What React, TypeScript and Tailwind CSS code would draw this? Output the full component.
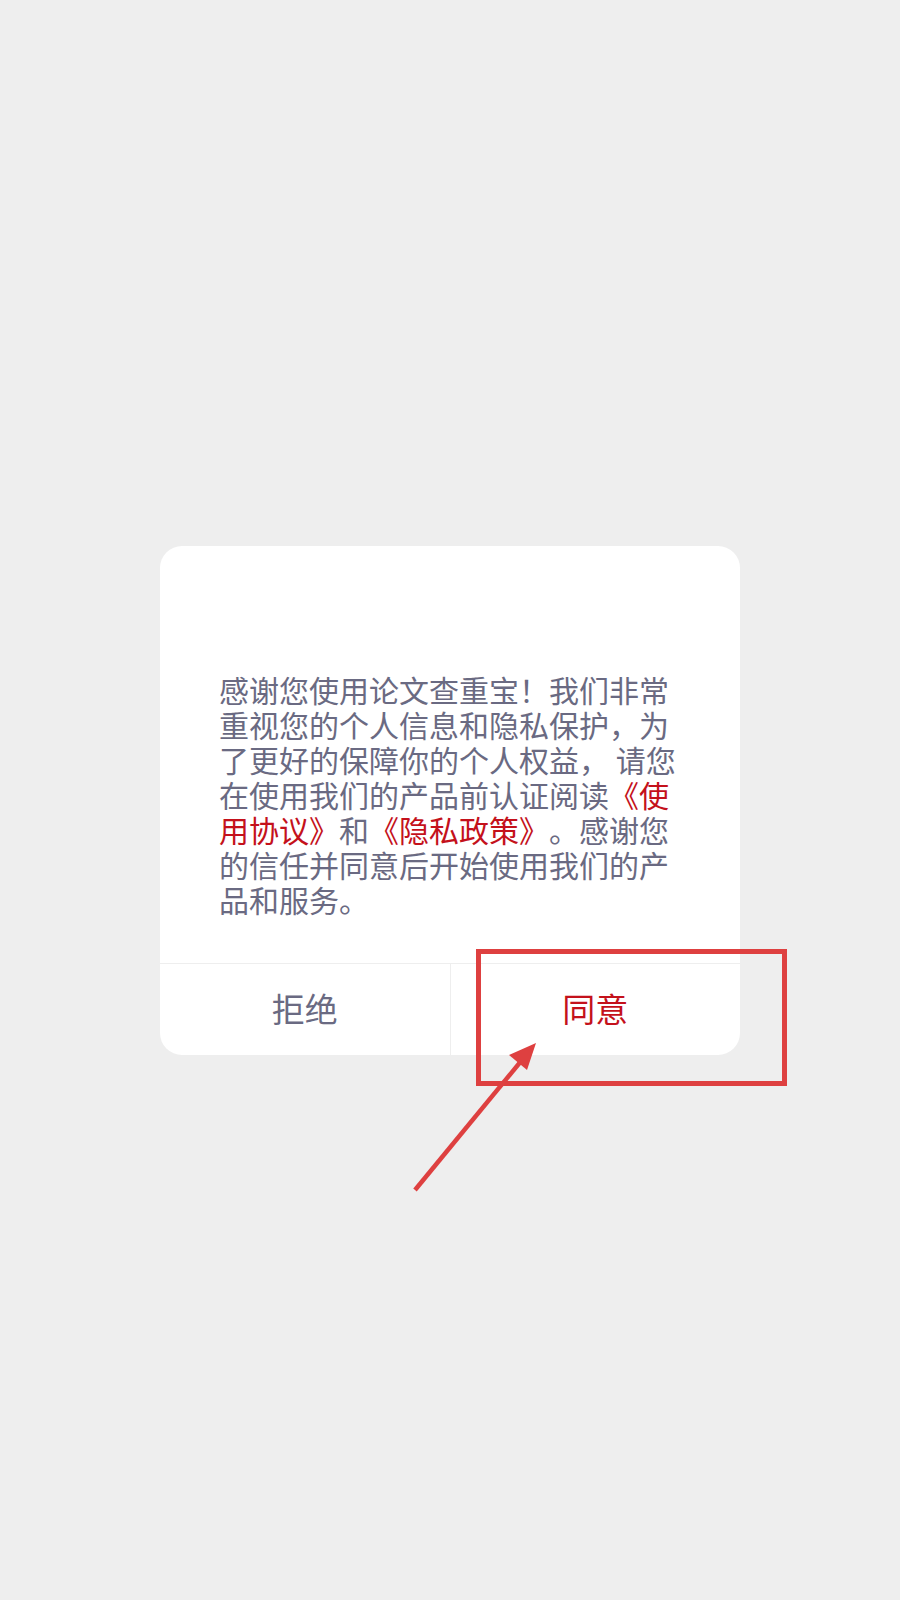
export default function App() {
  return (
    <div className="relative w-full h-[1600px] bg-[#eeeeee] flex items-center justify-center font-['Noto_Sans_CJK_SC',sans-serif]">
      <div className="w-[580px] h-[509px] bg-white rounded-[22px] flex flex-col overflow-hidden">
        <div className="flex-1 pt-[126px] pl-[59px] pr-[56px]">
          <p className="text-[30px] leading-[35px] text-[#6a6a82] [text-spacing-trim:space-all]">
            感谢您使用论文查重宝！我们非常重视您的个人信息和隐私保护，为了更好的保障你的个人权益， 请您在使用我们的产品前认证阅读
            <span className="text-[#c4111b]">《使用协议》</span>和
            <span className="text-[#c4111b]">《隐私政策》</span>
            。感谢您的信任并同意后开始使用我们的产品和服务。
          </p>
        </div>
        <div className="h-[92px] flex border-t border-[#eeeeee]">
          <button className="flex-1 flex items-center justify-center text-[33px] text-[#6a6a82] border-r border-[#eeeeee]">
            拒绝
          </button>
          <button className="flex-1 flex items-center justify-center text-[33px] text-[#c4111b]">
            同意
          </button>
        </div>
      </div>

      {/* annotation: highlight box */}
      <div className="absolute left-[476px] top-[949px] w-[311px] h-[137px] border-[5px] border-[#de4040]" />

      {/* annotation: arrow */}
      <svg className="absolute left-0 top-0" width="900" height="1600" viewBox="0 0 900 1600">
        <line x1="415" y1="1190" x2="522" y2="1060" stroke="#de4040" strokeWidth="4.5" />
        <polygon points="536,1043 509,1055 527,1070" fill="#de4040" />
      </svg>
    </div>
  );
}
